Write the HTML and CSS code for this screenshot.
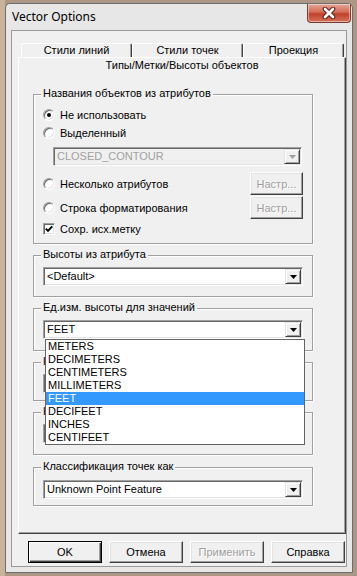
FILE: index.html
```html
<!DOCTYPE html>
<html lang="ru">
<head>
    <meta charset="UTF-8">
    <meta name="viewport" content="width=device-width, initial-scale=1.0">
    <title>Vector Options</title>
    <link rel="stylesheet" href="styles.css">
</head>
<body>

<div class="window">
    <div class="titlebar">
        <span class="title">Vector Options</span>
        <div class="close-btn">
            <svg width="16" height="12" viewBox="0 0 16 12">
                <path d="M4 2 L12 10 M12 2 L4 10" stroke="#5e2117" stroke-width="4.6" stroke-linecap="round"/>
                <path d="M4 2 L12 10 M12 2 L4 10" stroke="#fff" stroke-width="2.6" stroke-linecap="round"/>
            </svg>
        </div>
    </div>

    <div class="client">
        <div class="tab-row">
            <div class="tab tab-wide">Стили линий</div>
            <div class="tab tab-wide">Стили точек</div>
            <div class="tab tab-last">Проекция</div>
        </div>

        <div class="panel">
            <div class="tab-active">Типы/Метки/Высоты объектов</div>

            <div class="panel-body">
                <div class="group group-names">
                    <span class="group-label">Названия объектов из атрибутов</span>
                    <div class="choice"><span class="radio checked"></span>Не использовать</div>
                    <div class="choice"><span class="radio"></span>Выделенный</div>
                    <div class="combo combo-short disabled">
                        <span class="combo-text">CLOSED_CONTOUR</span>
                        <span class="combo-btn"><svg width="7" height="4" viewBox="0 0 7 4"><path d="M0 0H7L3.5 4Z"/></svg></span>
                    </div>
                    <div class="choice choice-btn"><span class="radio"></span>Несколько атрибутов<span class="btn small disabled">Настр...</span></div>
                    <div class="choice choice-btn tight"><span class="radio"></span>Строка форматирования<span class="btn small disabled">Настр...</span></div>
                    <div class="choice tight">
                        <span class="check"><svg width="8" height="8" viewBox="0 0 8 8"><polyline points="0.8,3.6 3,5.8 7.2,1.4" fill="none" stroke="#000" stroke-width="1.9"/></svg></span>Сохр. исх.метку
                    </div>
                </div>

                <div class="group group-heights">
                    <span class="group-label">Высоты из атрибута</span>
                    <div class="combo">
                        <span class="combo-text">&lt;Default&gt;</span>
                        <span class="combo-btn"><svg width="7" height="4" viewBox="0 0 7 4"><path d="M0 0H7L3.5 4Z"/></svg></span>
                    </div>
                </div>

                <div class="group group-units">
                    <span class="group-label">Ед.изм. высоты для значений</span>
                    <div class="combo open">
                        <span class="combo-text">FEET</span>
                        <span class="combo-btn"><svg width="7" height="4" viewBox="0 0 7 4"><path d="M0 0H7L3.5 4Z"/></svg></span>
                        <ul class="dropdown">
                            <li>METERS</li>
                            <li>DECIMETERS</li>
                            <li>CENTIMETERS</li>
                            <li>MILLIMETERS</li>
                            <li class="selected">FEET</li>
                            <li>DECIFEET</li>
                            <li>INCHES</li>
                            <li>CENTIFEET</li>
                        </ul>
                    </div>
                </div>

                <div class="group group-lines">
                    <span class="group-label">К</span>
                    <div class="combo">
                        <span class="combo-text"></span>
                        <span class="combo-btn"><svg width="7" height="4" viewBox="0 0 7 4"><path d="M0 0H7L3.5 4Z"/></svg></span>
                    </div>
                </div>

                <div class="group group-areas">
                    <span class="group-label">К</span>
                    <div class="combo">
                        <span class="combo-text"></span>
                        <span class="combo-btn"><svg width="7" height="4" viewBox="0 0 7 4"><path d="M0 0H7L3.5 4Z"/></svg></span>
                    </div>
                </div>

                <div class="group group-points">
                    <span class="group-label">Классификация точек как</span>
                    <div class="combo">
                        <span class="combo-text">Unknown Point Feature</span>
                        <span class="combo-btn"><svg width="7" height="4" viewBox="0 0 7 4"><path d="M0 0H7L3.5 4Z"/></svg></span>
                    </div>
                </div>
            </div>
        </div>

        <div class="buttons">
            <span class="btn btn-default">OK</span>
            <span class="btn">Отмена</span>
            <span class="btn disabled">Применить</span>
            <span class="btn">Справка</span>
        </div>
    </div>
</div>

</body>
</html>
```

FILE: styles.css
```css
html, body {
    margin: 0;
    width: 357px;
    height: 576px;
    overflow: hidden;
}
body {
    background: linear-gradient(to right, #c9b49b 0, #c9b49b 5px, #ad9684 5px);
    font-family: "Liberation Sans", Arial, sans-serif;
    font-size: 11px;
    color: #000;
}
.window {
    margin: 3px 0 0 5px;
    width: 348px;
    height: 570px;
    box-sizing: border-box;
    border: 1px solid #6e6e6e;
    border-radius: 5px 5px 0 0;
    background: #e7e7e7;
}
.titlebar {
    display: flex;
    align-items: flex-start;
    height: 26px;
}
.title {
    font-family: "Noto Sans", "Liberation Sans", sans-serif;
    font-size: 12px;
    line-height: 25px;
    padding-left: 6px;
}
.close-btn {
    margin-left: auto;
    margin-right: 1px;
    width: 44px;
    height: 19px;
    box-sizing: border-box;
    border: 1px solid #7b3a2e;
    border-top: none;
    border-radius: 0 0 4px 4px;
    background: linear-gradient(#e6a596, #d46d58 45%, #c0402a 55%, #d6735a);
    box-shadow: inset 0 0 0 1px rgba(255, 255, 255, 0.45);
    display: flex;
    align-items: center;
    justify-content: center;
}
.client {
    margin-left: 5px;
    width: 336px;
    height: 537px;
    box-sizing: border-box;
    border: 1px solid #9a9a9a;
    background: #f0f0f0;
}
.tab-row {
    display: flex;
    margin: 12px 0 0 9px;
    height: 14px;
}
.tab {
    box-sizing: border-box;
    height: 14px;
    border: 1px solid;
    border-bottom: none;
    border-color: #fff #404040 transparent #fff;
    box-shadow: inset -1px 0 0 #a0a0a0;
    border-radius: 2px 2px 0 0;
    text-align: center;
    line-height: 13px;
}
.tab-wide {
    width: 111px;
}
.tab-last {
    width: 101px;
}
.panel {
    margin-left: 6px;
    width: 328px;
    height: 477px;
    box-sizing: border-box;
    border: 1px solid;
    border-color: #fff #404040 #404040 #fff;
    box-shadow: inset -1px -1px 0 #a0a0a0;
}
.tab-active {
    height: 18px;
    line-height: 15px;
    text-align: center;
}
.panel-body {
    padding: 18px 0 0 14px;
}
.group {
    position: relative;
    width: 280px;
    box-sizing: border-box;
    border: 1px solid #a0a0a0;
    box-shadow: inset 1px 1px 0 #fff, 1px 1px 0 #fff;
    padding: 11px 9px 0 9px;
}
.group-label {
    position: absolute;
    top: -8px;
    left: 7px;
    padding: 0 2px;
    line-height: 13px;
    background: #f0f0f0;
}
.group-names {
    height: 150px;
}
.group-heights {
    margin-top: 11px;
    height: 42px;
}
.group-units {
    margin-top: 11px;
    height: 43px;
}
.group-lines {
    margin-top: 11px;
    height: 39px;
}
.group-areas {
    margin-top: 11px;
    height: 43px;
}
.group-points {
    margin-top: 12px;
    height: 39px;
    padding-top: 12px;
}
.choice {
    display: flex;
    align-items: center;
    gap: 5px;
    height: 18px;
}
.choice-btn {
    height: 23px;
    margin-top: 6px;
}
.choice.tight {
    margin-top: 1px;
}
.radio {
    position: relative;
    width: 12px;
    height: 12px;
    box-sizing: border-box;
    border: 1px solid;
    border-color: #a0a0a0 #fff #fff #a0a0a0;
    border-radius: 50%;
    background: #fff;
    box-shadow: inset 1px 1px 0 #696969, inset -1px -1px 0 #e3e3e3;
}
.radio.checked::after {
    content: "";
    position: absolute;
    left: 3px;
    top: 3px;
    width: 4px;
    height: 4px;
    border-radius: 50%;
    background: #000;
}
.check {
    width: 12px;
    height: 12px;
    box-sizing: border-box;
    border: 1px solid;
    border-color: #a0a0a0 #fff #fff #a0a0a0;
    background: #fff;
    box-shadow: inset 1px 1px 0 #696969, inset -1px -1px 0 #e3e3e3;
    display: flex;
    align-items: center;
    justify-content: center;
}
.combo {
    position: relative;
    display: flex;
    width: 260px;
    height: 19px;
    box-sizing: border-box;
    padding: 1px;
    border: 1px solid;
    border-color: #a0a0a0 #fff #fff #a0a0a0;
    box-shadow: inset 1px 1px 0 #696969, inset -1px -1px 0 #e3e3e3;
    background: #fff;
}
.combo-short {
    width: 249px;
    margin: 5px 0 0 10px;
}
.combo-text {
    flex: 1;
    padding-left: 2px;
    line-height: 15px;
    white-space: nowrap;
}
.combo-btn {
    width: 16px;
    box-sizing: border-box;
    border: 1px solid;
    border-color: #e3e3e3 #404040 #404040 #e3e3e3;
    box-shadow: inset 1px 1px 0 #fff, inset -1px -1px 0 #a0a0a0;
    background: #f0f0f0;
    display: flex;
    align-items: center;
    justify-content: center;
}
.combo.disabled {
    background: #f0f0f0;
    color: #a0a0a0;
}
.combo.disabled svg {
    fill: #a0a0a0;
}
.dropdown {
    position: absolute;
    top: 18px;
    left: 1px;
    z-index: 5;
    width: 260px;
    box-sizing: border-box;
    margin: 0;
    padding: 0;
    list-style: none;
    border: 1px solid #646464;
    background: #fff;
}
.dropdown li {
    height: 13px;
    line-height: 13px;
    padding-left: 2px;
}
.dropdown li.selected {
    background: #3399ff;
    color: #fff;
}
.btn {
    width: 74px;
    height: 22px;
    box-sizing: border-box;
    border: 1px solid;
    border-color: #fff #404040 #404040 #fff;
    box-shadow: inset -1px -1px 0 #a0a0a0, inset 1px 1px 0 #e3e3e3;
    background: #f0f0f0;
    display: flex;
    align-items: center;
    justify-content: center;
}
.btn.small {
    width: 53px;
    height: 23px;
    margin-left: auto;
}
.btn.disabled {
    color: #a0a0a0;
    text-shadow: 1px 1px 0 #fff;
}
.btn-default {
    border-color: #000;
    box-shadow: inset 1px 1px 0 #fff, inset -1px -1px 0 #404040, inset -2px -2px 0 #a0a0a0;
}
.buttons {
    display: flex;
    gap: 7px;
    margin-top: 7px;
    padding-left: 16px;
}
```
